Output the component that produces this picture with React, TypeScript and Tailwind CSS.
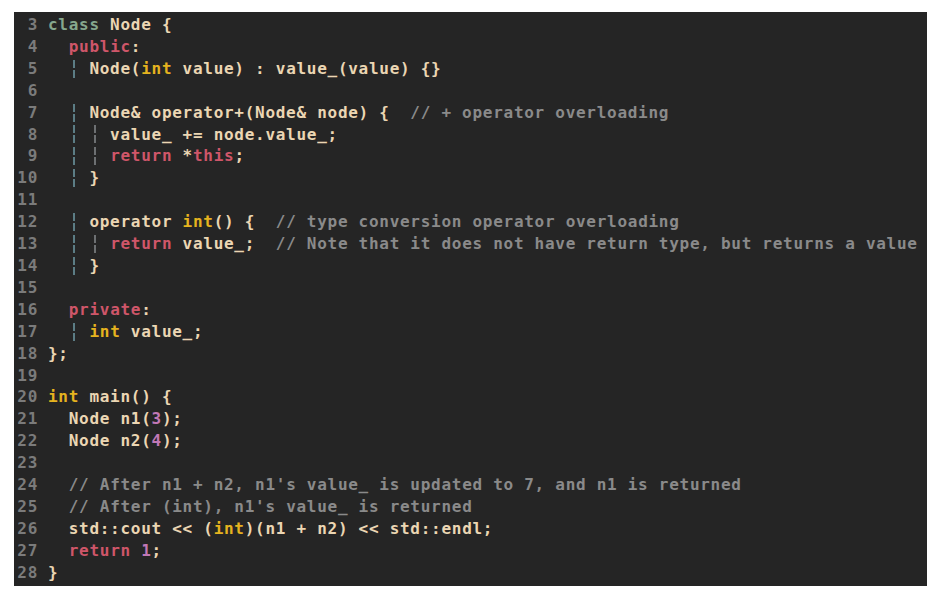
import React from "react";

type Tok = [string, string];

const C = {
  txt: "#ebd6b3",
  kw: "#cf5669",
  cls: "#86a78d",
  ty: "#e5b31f",
  num: "#c178b6",
  cm: "#8a8a8a",
};

const t = (s: string): Tok => [s, C.txt];
const kw = (s: string): Tok => [s, C.kw];
const ty = (s: string): Tok => [s, C.ty];
const num = (s: string): Tok => [s, C.num];
const cm = (s: string): Tok => [s, C.cm];
const g1: Tok = ["G1", ""];
const g2: Tok = ["G2", ""];

const lines: [number, Tok[]][] = [
  [3, [[`class`, C.cls], t(" Node {")]],
  [4, [t("  "), kw("public"), t(":")]],
  [5, [t("  "), g1, t(" Node("), ty("int"), t(" value) : value_(value) {}")]],
  [6, []],
  [7, [t("  "), g1, t(" Node& operator+(Node& node) {  "), cm("// + operator overloading")]],
  [8, [t("  "), g1, t(" "), g2, t(" value_ += node.value_;")]],
  [9, [t("  "), g1, t(" "), g2, t(" "), kw("return"), t(" *"), kw("this"), t(";")]],
  [10, [t("  "), g1, t(" }")]],
  [11, []],
  [12, [t("  "), g1, t(" operator "), ty("int"), t("() {  "), cm("// type conversion operator overloading")]],
  [13, [t("  "), g1, t(" "), g2, t(" "), kw("return"), t(" value_;  "), cm("// Note that it does not have return type, but returns a value")]],
  [14, [t("  "), g1, t(" }")]],
  [15, []],
  [16, [t("  "), kw("private"), t(":")]],
  [17, [t("  "), g1, t(" "), ty("int"), t(" value_;")]],
  [18, [t("};")]],
  [19, []],
  [20, [ty("int"), t(" main() {")]],
  [21, [t("  Node n1("), num("3"), t(");")]],
  [22, [t("  Node n2("), num("4"), t(");")]],
  [23, []],
  [24, [t("  "), cm("// After n1 + n2, n1's value_ is updated to 7, and n1 is returned")]],
  [25, [t("  "), cm("// After (int), n1's value_ is returned")]],
  [26, [t("  std::cout << ("), ty("int"), t(")(n1 + n2) << std::endl;")]],
  [27, [t("  "), kw("return"), t(" "), num("1"), t(";")]],
  [28, [t("}")]],
];

function Guide({ level }: { level: 1 | 2 }) {
  const seg = level === 1 ? "w-[2px] h-[8px] bg-[#5c7d85]" : "w-[2px] h-[8px] bg-[#6d7072]";
  return (
    <span className="inline-flex flex-col items-center justify-center gap-[2px] w-[10.35px] h-[21.92px] align-top">
      <span className={seg} />
      <span className={seg} />
    </span>
  );
}

export default function App() {
  return (
    <div className="w-[939px] h-[596px] bg-white pl-[14px] pt-[12px]">
      <div
        className="w-[913px] h-[574px] bg-[#252525] pt-[2px] pl-[2px] text-[16px] leading-[21.92px] tracking-[0.72px] font-bold overflow-hidden"
        style={{ fontFamily: '"DejaVu Sans Mono", "Liberation Mono", monospace' }}
      >
        {lines.map(([n, toks]) => (
          <div key={n} className="flex h-[21.92px]">
            <span className="w-[22px] text-right text-[#7b7b7b] shrink-0">{n}</span>
            <span className="ml-[10px] whitespace-pre">
              {toks.map(([s, c], i) =>
                s === "G1" ? (
                  <Guide key={i} level={1} />
                ) : s === "G2" ? (
                  <Guide key={i} level={2} />
                ) : (
                  <span key={i} style={{ color: c }}>
                    {s}
                  </span>
                )
              )}
            </span>
          </div>
        ))}
      </div>
    </div>
  );
}
